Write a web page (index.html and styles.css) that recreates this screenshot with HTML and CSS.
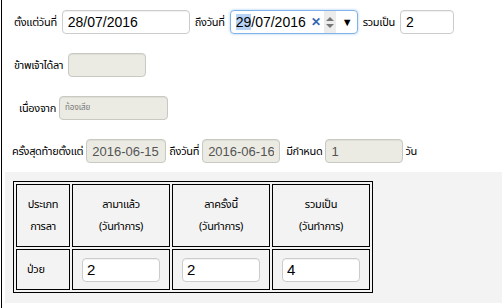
FILE: index.html
```html
<!DOCTYPE html>
<html lang="th">
  <head>
    <meta charset="UTF-8" />
    <meta name="viewport" content="width=device-width, initial-scale=1.0" />
    <title>ใบลา</title>

    <link rel="stylesheet" href="styles.css">
  </head>
  <body>
    <div class="page">
      <div class="form">
        <div class="row wide">
          <label>ตั้งแต่วันที่</label>
          <input class="field w128" type="text" value="28/07/2016">
          <label>ถึงวันที่</label>
          <div class="datebox">
            <span class="sel">29</span><span>/07/2016</span>
            <span class="clear">&#x2715;</span>
            <span class="spin"><i class="up"></i><i class="down"></i></span>
            <span class="drop">&#x25BC;</span>
          </div>
          <label>รวมเป็น</label>
          <input class="field w54" type="text" value="2">
        </div>

        <div class="row wide">
          <label>ข้าพเจ้าได้ลา</label>
          <input class="field off w78" type="text" value="" disabled>
        </div>

        <div class="row indent">
          <label>เนื่องจาก</label>
          <input class="field off w109 tiny" type="text" value="ท้องเสีย" disabled>
        </div>

        <div class="row">
          <label>ครั้งสุดท้ายตั้งแต่</label>
          <input class="field off w80" type="text" value="2016-06-15" disabled>
          <label>ถึงวันที่</label>
          <input class="field off w78" type="text" value="2016-06-16" disabled>
          <label class="gap">มีกำหนด</label>
          <input class="field off w78" type="text" value="1" disabled>
          <label class="tight">วัน</label>
        </div>
      </div>

      <div class="panel">
        <table class="leave">
          <tr>
            <th class="type">ประเภท<br>การลา</th>
            <th>ลามาแล้ว<br>(วันทำการ)</th>
            <th>ลาครั้งนี้<br>(วันทำการ)</th>
            <th>รวมเป็น<br>(วันทำการ)</th>
          </tr>
          <tr>
            <td class="name">ป่วย</td>
            <td><input class="cell-input" type="text" value="2"></td>
            <td><input class="cell-input" type="text" value="2"></td>
            <td><input class="cell-input" type="text" value="4"></td>
          </tr>
        </table>
      </div>
    </div>
  </body>
</html>
```

FILE: styles.css
```css
body {
  margin: 0;
  background: #fff;
  font-family: Tahoma, "Noto Sans Thai", "DejaVu Sans", "Noto Sans", sans-serif;
  font-size: 11px;
  letter-spacing: -0.3px;
  color: #000;
}

.page {
  margin-left: 1px;
  border-left: 1px solid #000;
  height: 308px;
  box-sizing: border-box;
}

.form {
  padding: 10px 0 0 10px;
}

.row {
  display: flex;
  align-items: center;
  gap: 3px;
  height: 24px;
  margin-bottom: 19px;
}

.row:last-child {
  margin-bottom: 9px;
}

.row.indent {
  padding-left: 7px;
}

.row label {
  white-space: nowrap;
}

.row.wide label {
  padding: 0 2px;
}

.row label.gap {
  margin-left: 3px;
}

.row label.tight {
  margin-left: -1px;
}

.field {
  box-sizing: border-box;
  height: 24px;
  border: 1px solid #ccc;
  border-radius: 4px;
  padding: 0 5px;
  font-family: "Liberation Sans", Arial, sans-serif;
  font-size: 14px;
  letter-spacing: 0;
  color: #000;
  background: #fff;
  box-shadow: inset 0 1px 1px rgba(0, 0, 0, 0.06);
  outline: none;
}

.field.off {
  background: #ebebe4;
  border-color: #c9c9c4;
  color: #545454;
  font-size: 13px;
}

.field.tiny {
  font-family: Tahoma, "Noto Sans Thai", sans-serif;
  font-size: 8px;
  color: #777;
}

.w54 { width: 54px; }
.w78 { width: 78px; }
.w80 { width: 80px; }
.w109 { width: 109px; }
.w128 { width: 128px; }

.datebox {
  box-sizing: border-box;
  width: 128px;
  height: 24px;
  display: flex;
  align-items: center;
  padding: 0 4px 0 5px;
  border: 1px solid #7fb2e6;
  border-radius: 4px;
  box-shadow: 0 0 3px #a9cdf1;
  font-family: "Liberation Sans", Arial, sans-serif;
  font-size: 14px;
  letter-spacing: 0;
}

.datebox .sel {
  background: #b7d3f5;
}

.datebox .clear {
  color: #3567b3;
  font-size: 12px;
  font-weight: bold;
  margin-left: 5px;
}

.datebox .spin {
  display: flex;
  flex-direction: column;
  justify-content: center;
  gap: 3px;
  width: 14px;
  height: 22px;
  margin-left: 3px;
  background: #ececec;
  align-items: center;
}

.spin i {
  display: block;
  width: 0;
  height: 0;
  border-left: 4px solid transparent;
  border-right: 4px solid transparent;
}

.spin .up {
  border-bottom: 4px solid #777;
}

.spin .down {
  border-top: 4px solid #777;
}

.datebox .drop {
  font-size: 11px;
  margin-left: 6px;
}

.panel {
  margin-left: 3px;
  background: #f3f3f3;
  padding: 9px 0 10px 8px;
}

.leave {
  border: 1px solid #000;
  border-spacing: 2px;
  width: 360px;
}

.leave th,
.leave td {
  border: 1px solid #000;
  padding: 0;
  text-align: center;
}

.leave th {
  height: 61px;
  line-height: 22px;
  font-weight: normal;
  width: 96px;
}

.leave th.type {
  width: 52px;
}

.leave td {
  height: 39px;
}

.leave td.name {
  text-align: left;
  padding-left: 10px;
}

.cell-input {
  box-sizing: border-box;
  width: 78px;
  height: 24px;
  border: 1px solid #ccc;
  border-radius: 4px;
  padding: 0 4px;
  font-family: "Liberation Sans", Arial, sans-serif;
  font-size: 15px;
  letter-spacing: 0;
  background: #fff;
  box-shadow: inset 0 1px 1px rgba(0, 0, 0, 0.06);
}
```
